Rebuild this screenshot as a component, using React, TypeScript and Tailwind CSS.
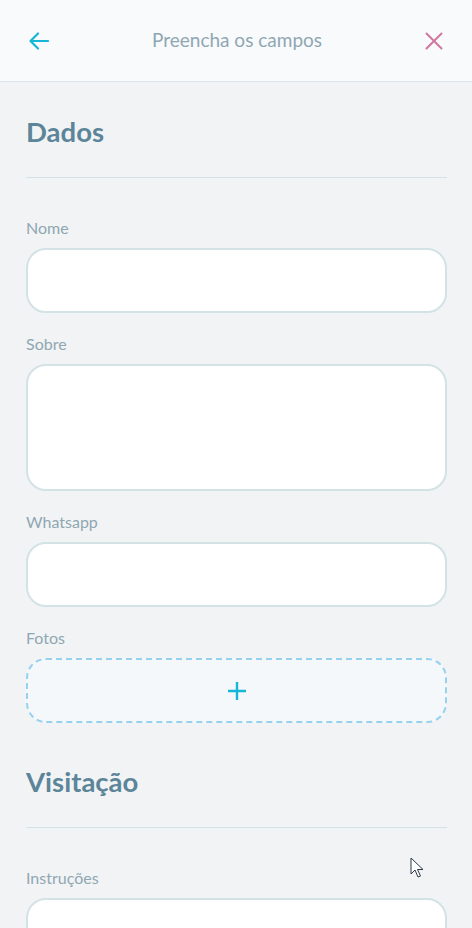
import React from "react";

const font = { fontFamily: "Lato, 'Open Sans', sans-serif" };

function Field({ label, h = "h-[65px]", first = false }: { label: string; h?: string; first?: boolean }) {
  return (
    <div className={first ? "mt-[38px]" : "mt-[19px]"}>
      <label className="block text-[16px] leading-[24px] text-[#8fa7b2]">{label}</label>
      <div className={`mt-[8px] ${h} w-full rounded-[20px] border-2 border-[#d3e2e5] bg-white`} />
    </div>
  );
}

function Heading({ text, mt }: { text: string; mt: string }) {
  return (
    <div className={`${mt} border-b border-[#d3e2e5] pb-[28px]`}>
      <h2 className="text-[27.5px] font-bold leading-[34px] text-[#5c8599]">{text}</h2>
    </div>
  );
}

export default function App() {
  return (
    <div className="relative min-h-[928px] w-[472px] overflow-hidden bg-[#f2f3f5]" style={font}>
      <header className="flex h-[82px] items-center justify-between border-b border-[#dde3f0] bg-[#f9fafc] px-[29px]">
        <svg width="20" height="18" viewBox="0 0 20 18" fill="none" stroke="#15b6d6" strokeWidth="2.2" strokeLinecap="round" strokeLinejoin="round">
          <path d="M19 9H1.5M9 1.5L1.5 9L9 16.5" />
        </svg>
        <span className="text-[19px] text-[#8fa7b2]">Preencha os campos</span>
        <svg width="18" height="18" viewBox="0 0 18 18" fill="none" stroke="#d1779f" strokeWidth="2" strokeLinecap="round">
          <path d="M1.5 1.5L16.5 16.5M16.5 1.5L1.5 16.5" />
        </svg>
      </header>
      <main className="px-[26px] pr-[25px]">
        <Heading text="Dados" mt="mt-[33px]" />
        <Field label="Nome" first />
        <Field label="Sobre" h="h-[127px]" />
        <Field label="Whatsapp" />
        <div className="mt-[19px]">
          <label className="block text-[16px] leading-[24px] text-[#8fa7b2]">Fotos</label>
          <div className="mt-[8px] flex h-[65px] w-full items-center justify-center rounded-[20px] border-2 border-dashed border-[#96d2f0] bg-[#f5f8fa]">
            <svg width="20" height="20" viewBox="0 0 20 20" fill="none" stroke="#15b6d6" strokeWidth="2.4">
              <path d="M10 1V19M1 10H19" />
            </svg>
          </div>
        </div>
        <Heading text="Visitação" mt="mt-[42px]" />
        <Field label="Instruções" h="h-[127px]" first />
      </main>
      <svg className="absolute left-[410px] top-[857px]" width="14" height="22" viewBox="0 0 14 22">
        <path d="M1 1V17L5 13L8 20L10.5 19L7.5 12.5H13Z" fill="white" stroke="#2b3a4a" strokeWidth="1" strokeLinejoin="round" />
      </svg>
    </div>
  );
}
